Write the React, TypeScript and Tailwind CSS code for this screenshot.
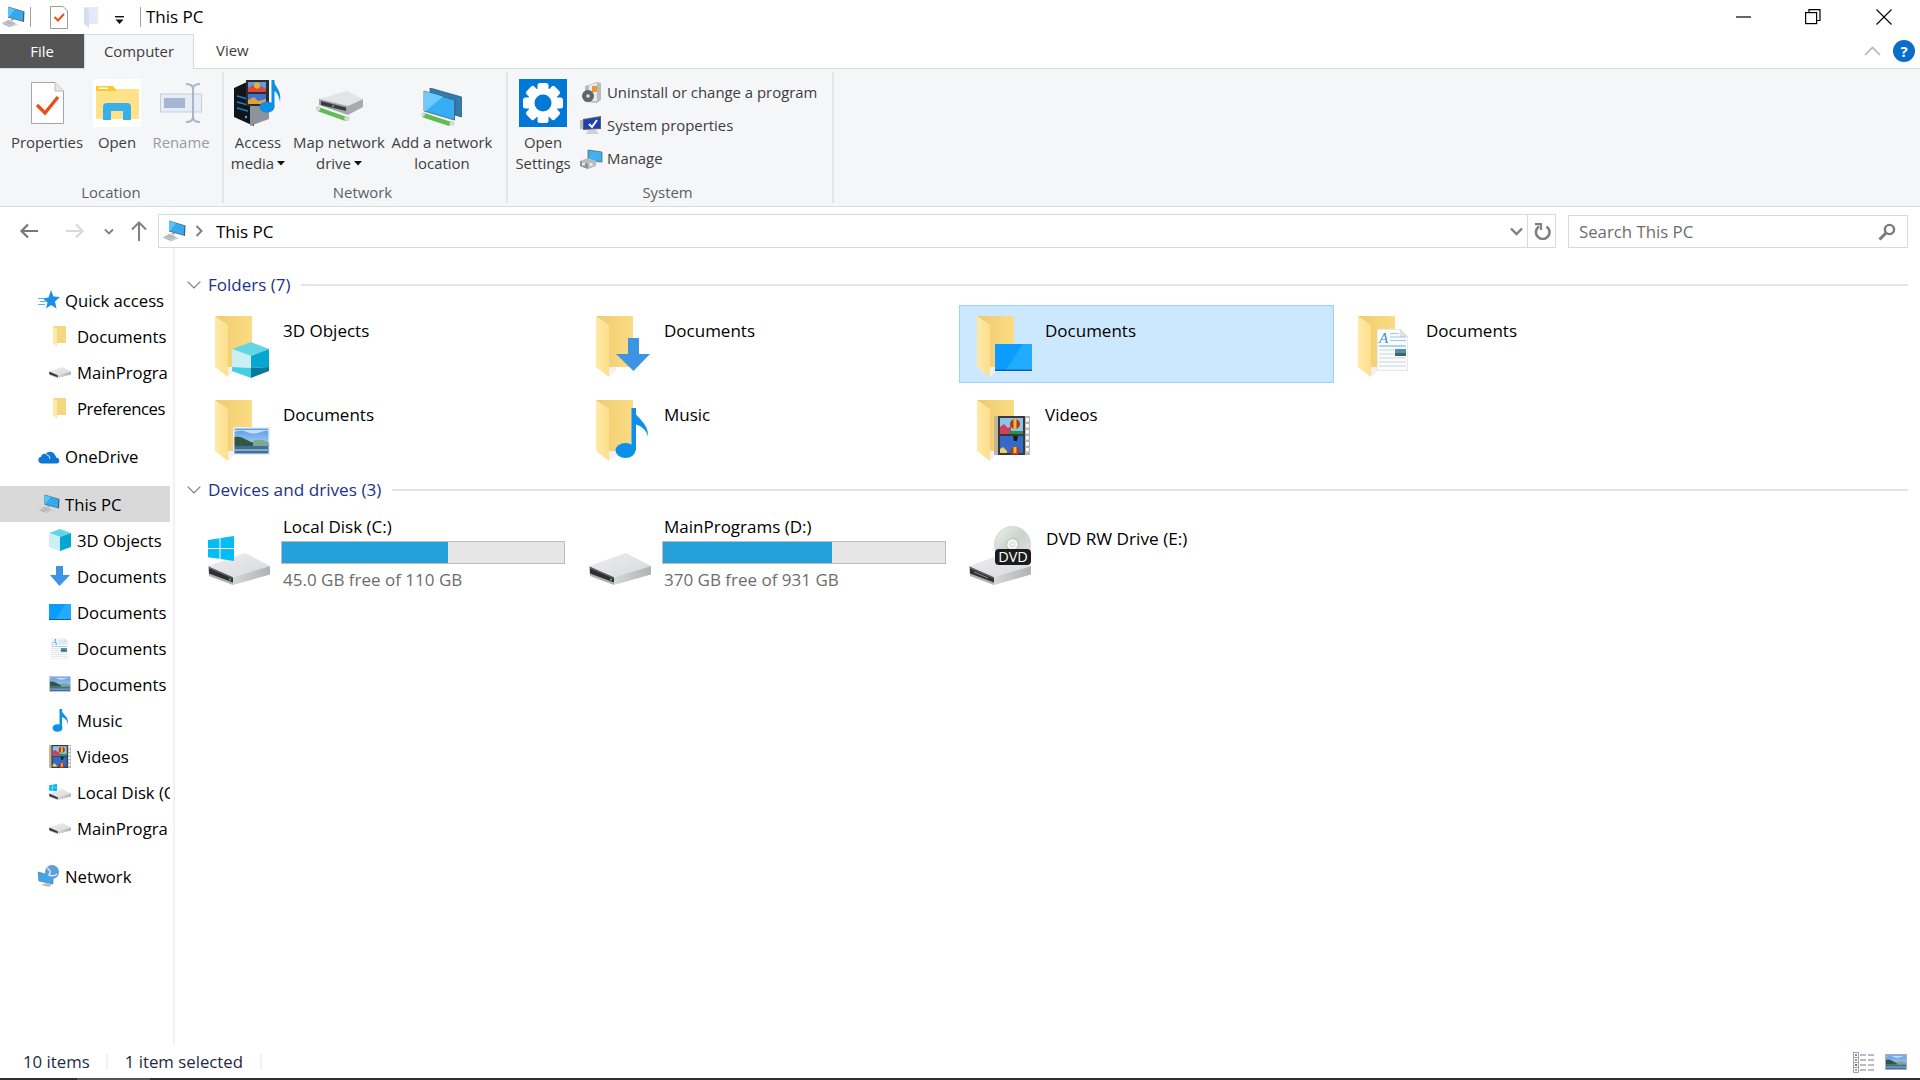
import React from "react";

const Tri = () => (
  <svg width="8" height="5" viewBox="0 0 8 5" className="inline-block ml-[3px] mb-[3px]"><path d="M0 0h8L4 4.5z" fill="#111" /></svg>
);

const Pc = ({ w = 24, h = 22 }: { w?: number; h?: number }) => (
  <svg width={w} height={h} viewBox="0 0 24 22">
    <path d="M0.5 17L8 13.5L17 18.5L9 21.5z" fill="#cfd3d8" />
    <path d="M2 17.5L9 20.2M4 16L11.5 18.7M6 14.8L13.5 17.5" stroke="#8f949a" strokeWidth="0.7" />
    <path d="M7 0.5L23.5 5.5L23 16L7 11.5z" fill="#4a5c6c" />
    <path d="M7 1L22.3 5.7L21.8 15L7 10.8z" fill="#35a9f0" />
    <path d="M7 1L14 3.2L8 10.9L7 10.8z" fill="#5cc2f8" />
    <path d="M11 12.5L13 13L12 14.8L9.5 14z" fill="#9aa0a6" />
  </svg>
);

const Drive = ({ w = 62, h = 32, led = true, slot = false }: { w?: number; h?: number; led?: boolean; slot?: boolean }) => (
  <svg width={w} height={h} viewBox="0 0 62 32" preserveAspectRatio="none">
    <defs>
      <linearGradient id="dr" x1="0" x2="1" y1="0" y2="0"><stop offset="0" stopColor="#d6d7d9" /><stop offset="1" stopColor="#b0b2b4" /></linearGradient>
      <linearGradient id="dt" x1="0" x2="1" y1="0" y2="1"><stop offset="0" stopColor="#eeeef0" /><stop offset="1" stopColor="#d8d9dc" /></linearGradient>
    </defs>
    <path d="M0 13L37 0L62 13L25 24z" fill="url(#dt)" />
    <path d="M25 24L62 13L62 21.5L25 32z" fill="url(#dr)" />
    <path d="M0 13L25 24L25 32L1 23z" fill="#b0b1b3" />
    <path d="M1 14L25 24.5L25 29.5L1 20.5z" fill="#2f2f31" />
    <path d="M1 14L25 24.5L25 25.8L1 15.6z" fill="#626264" />
    {led && <circle cx="22" cy="26.5" r="1" fill="#35e04a" />}
    {slot && <path d="M5 19L19 25" stroke="#8a8a8a" strokeWidth="1" />}
  </svg>
);

const Win = ({ s = 26 }: { s?: number }) => (
  <svg width={s} height={s} viewBox="0 0 26 26">
    <path d="M0 4L11.5 2.3V12H0z" fill="#05bdf4" />
    <path d="M12.5 2L26 0V12H12.5z" fill="#05bdf4" />
    <path d="M0 13H11.5V22.8L0 21.2z" fill="#05bdf4" />
    <path d="M12.5 13H26V25L12.5 23z" fill="#05bdf4" />
  </svg>
);

const FolderSm = () => (
  <svg width="15" height="21" viewBox="0 0 15 21">
    <path d="M1 0H14V17H4z" fill="#f6d77f" />
    <path d="M1 0L5 3V21L1 17z" fill="#ffe9a6" />
  </svg>
);

const Landscape = ({ w, h, frame = "#fff" }: { w: number; h: number; frame?: string }) => (
  <svg width={w} height={h} viewBox="0 0 37 28" preserveAspectRatio="none">
    <defs><linearGradient id="sky" x1="0" x2="0" y1="0" y2="1"><stop offset="0" stopColor="#5a9ce8" /><stop offset="1" stopColor="#cde3f4" /></linearGradient></defs>
    <rect x="0" y="0" width="37" height="28" fill={frame} stroke="#d8d8d8" strokeWidth="0.8" />
    <rect x="1.5" y="1.5" width="34" height="25" fill="url(#sky)" />
    <path d="M1.5 5Q8 2 14 5T28 5T35.5 6V3H1.5z" fill="#dcebf8" opacity="0.8" />
    <path d="M1.5 10Q7 9 12 12T22 16L35.5 17V19H1.5z" fill="#34583f" />
    <path d="M20 14Q26 11 35.5 15V19H20z" fill="#7fa98f" />
    <rect x="1.5" y="19" width="34" height="7.5" fill="#3f6f9c" />
    <rect x="1.5" y="22" width="34" height="2" fill="#87abc5" />
  </svg>
);

const Film = ({ w, h }: { w: number; h: number }) => (
  <svg width={w} height={h} viewBox="0 0 36 39" preserveAspectRatio="none">
    <rect x="0" y="0" width="36" height="39" fill="#b8b8b8" />
    <rect x="4" y="0" width="27" height="39" fill="#343a42" />
    {[2, 8, 14, 20, 26, 32].map((y) => (
      <g key={y}><rect x="0.8" y={y} width="2.4" height="3.6" fill="#d6b45a" /><rect x="32" y={y} width="2.8" height="3.6" fill="#fff" /></g>
    ))}
    <rect x="6" y="2" width="23" height="16" fill="#8cc4ec" />
    <path d="M6 18V11L10 8L14 12L17 10V18z" fill="#d1405a" />
    <rect x="15" y="15" width="14" height="3" fill="#2d8f4c" />
    <circle cx="21" cy="8" r="5" fill="#b8341f" /><path d="M19.5 3h3v10h-3z" fill="#e8c030" />
    <rect x="6" y="20" width="23" height="17" fill="#3469c8" />
    <path d="M19 20h5l-1 5h-3z" fill="#1c1c1c" />
    <circle cx="21" cy="35" r="4.5" fill="#b8341f" /><path d="M19.5 31h3v6h-3z" fill="#e8c030" />
    <path d="M6 37V33L9 31L13 35V37z" fill="#f0d060" />
  </svg>
);

const DocPage = ({ w, h }: { w: number; h: number }) => (
  <svg width={w} height={h} viewBox="0 0 31 42" preserveAspectRatio="none">
    <path d="M0 0H23L31 8V42H0z" fill="#fafbfc" stroke="#c5c8cc" strokeWidth="0.7" />
    <path d="M23 0L31 8H23z" fill="#dfe2e5" />
    <text x="2" y="14" fontFamily="Liberation Serif, serif" fontStyle="italic" fontSize="15" fill="#3b93d8">A</text>
    <path d="M13 4.5H22M13 8H29M13 11.5H29" stroke="#9fc7e6" strokeWidth="1" />
    <path d="M2 17H29" stroke="#9fc7e6" strokeWidth="1.6" />
    <path d="M2 21H17M2 25H17M2 29H29M2 33H29M2 37H29" stroke="#cfd4da" strokeWidth="1" />
    <rect x="18" y="20" width="11" height="7" fill="#4f8fb8" /><rect x="18" y="24" width="11" height="3" fill="#40665a" />
  </svg>
);

const Folder = ({ kind }: { kind: string }) => (
  <div className="relative w-[58px] h-[62px] shrink-0">
    <svg width="58" height="62" viewBox="0 0 58 62" className="block">
      <defs>
        <linearGradient id="fb" x1="0" x2="1" y1="0" y2="0"><stop offset="0" stopColor="#efca6f" /><stop offset="1" stopColor="#fbdc83" /></linearGradient>
        <linearGradient id="fd" x1="0" x2="1" y1="0" y2="0"><stop offset="0" stopColor="#ffeaa8" /><stop offset="1" stopColor="#fddf8c" /></linearGradient>
      </defs>
      <path d="M0 0H37V51H13z" fill="url(#fb)" />
      <path d="M0 0L13 9V61L0 51z" fill="url(#fd)" />
      <path d="M13 51H20V54L13 61z" fill="#f1f1f1" />
      {kind === "cube" && (
        <g>
          <path d="M17 33L36 26L54 33L36 40z" fill="#63d6e6" />
          <path d="M17 33L36 40V52L17 51z" fill="#cbeff3" />
          <path d="M36 40L54 33V51L36 52z" fill="#04a7d2" />
          <path d="M17 51L36 52V62L17 55z" fill="#3ed0e2" />
          <path d="M36 52L54 51V55L36 62z" fill="#06799c" />
        </g>
      )}
      {kind === "down" && <path d="M32 22H43V38H54L37.5 55L20 38H32z" fill="#3d94e3" />}
      {kind === "desk" && (
        <g>
          <rect x="18" y="28" width="37" height="27" fill="#0a9dfd" />
          <path d="M28 55L46 28H55V55z" fill="#22acff" />
          <rect x="18" y="53.6" width="37" height="1.4" fill="#0b5fae" />
        </g>
      )}
      {kind === "music" && (
        <g fill="#0c90e9">
          <ellipse cx="29.5" cy="50.5" rx="10" ry="7.5" />
          <rect x="35.5" y="8" width="4.5" height="42" />
          <path d="M37 8C39 18 53 22 52 37C51 31 46 26 39 24z" />
        </g>
      )}
    </svg>
    {kind === "doc" && <div className="absolute left-[19px] top-[13px]"><DocPage w={31} h={42} /></div>}
    {kind === "pic" && <div className="absolute left-[18px] top-[27px]"><Landscape w={37} h={28} /></div>}
    {kind === "film" && <div className="absolute left-[17px] top-[16px]"><Film w={36} h={39} /></div>}
  </div>
);

const Tile = ({ kind, label, sel }: { kind: string; label: string; sel?: boolean }) => (
  <div className={`flex h-[78px] pl-[17px] pt-[10px] border ${sel ? "bg-[#cce8ff] border-[#99d1ff]" : "border-transparent"}`}>
    <Folder kind={kind} />
    <div className="ml-[10px] mt-[3px] text-black leading-6">{label}</div>
  </div>
);

const Bar = ({ pct, label }: { pct: number; label: string }) => (
  <div className="flex flex-col">
    <div className="w-[284px] h-[23px] mt-[2px] bg-[#e6e6e6] border border-[#bcbcbc]">
      <div className="h-full bg-[#26a0da]" style={{ width: `${pct}%` }} />
    </div>
    <div className="mt-[4px] ml-[2px] leading-6 text-[#6d6d6d]">{label}</div>
  </div>
);

const Nav = ({ icon, label, lvl, sel, tight }: { icon: React.ReactNode; label: string; lvl?: boolean; sel?: boolean; tight?: boolean }) => (
  <div className={`flex items-center h-9 overflow-hidden whitespace-nowrap text-black ${sel ? "bg-[#d9d9d9]" : ""}`}>
    <div className={lvl ? "w-[77px] pl-[49px] flex justify-start shrink-0" : "w-[65px] pl-[38px] flex shrink-0"}>{icon}</div>
    <span className={`mt-[1px] ${tight ? "tracking-[-0.45px]" : ""}`}>{label}</span>
  </div>
);

const BigBtn = ({ w, icon, l1, l2, tri, dim }: { w: number; icon: React.ReactNode; l1: string; l2?: string; tri?: boolean; dim?: boolean }) => (
  <div className="flex flex-col items-center shrink-0" style={{ width: w }}>
    <div className="h-12 flex items-center justify-center">{icon}</div>
    <div className={`mt-1 pt-[0.5px] text-center leading-[21px] whitespace-nowrap ${dim ? "text-[#9b9b9b]" : "text-[#3d3d3d]"}`}>
      <div>{l1}</div>
      {l2 && <div>{l2}{tri && <Tri />}</div>}
    </div>
  </div>
);

const Sep = () => <div className="w-[2px] bg-[#e4e5e7] mt-[3px] mb-[3px] shrink-0" />;

const GroupLabel = ({ t, shift }: { t: string; shift?: boolean }) => (
  <div className={`mt-auto mb-[3px] h-[22px] leading-[22px] text-center text-[#5a5f66] ${shift ? "pr-[5px]" : ""}`}>{t}</div>
);

const Gear = () => (
  <svg width="48" height="48" viewBox="0 0 48 48">
    <rect width="48" height="48" fill="#0078d7" />
    <g fill="#fff">
      {[0, 45, 90, 135, 180, 225, 270, 315].map((a) => (
        <rect key={a} x="18.5" y="4" width="11" height="12" rx="2.5" transform={`rotate(${a} 24 24)`} />
      ))}
      <circle cx="24" cy="24" r="15" />
    </g>
    <circle cx="24" cy="24" r="8.5" fill="#0078d7" />
  </svg>
);

const AccessMedia = () => (
  <svg width="48" height="48" viewBox="0 0 48 48">
    <path d="M0 9L13 3H20V47L0 38z" fill="#111418" />
    <path d="M16 24H35V40L16 47z" fill="#8f9298" />
    <path d="M3 17L14 20M3 23L14 26M3 29L14 32" stroke="#1c7fc8" strokeWidth="1.4" />
    <circle cx="12" cy="38" r="1.2" fill="#3cb2f0" />
    <rect x="12" y="1" width="23" height="26" fill="#2d2d2f" />
    <rect x="14" y="3" width="18" height="10" fill="#5a9ee0" />
    <rect x="14" y="15" width="18" height="10" fill="#3c72d0" />
    <path d="M14 13V9L19 6L23 10L27 7L32 10V13z" fill="#d84a3a" />
    <circle cx="23" cy="6.5" r="3" fill="#e8b030" />
    <path d="M14 25V21L20 18L24 22L32 20V25z" fill="#e0a040" />
    <g fill="#0e8fe6">
      <ellipse cx="33" cy="28" rx="7.5" ry="5.5" />
      <rect x="37.5" y="1" width="3" height="27" />
      <path d="M39 1C41 8 48 11 46 23C45 17 43 13 40 12z" />
    </g>
  </svg>
);

const MapNet = () => (
  <svg width="48" height="31" viewBox="0 0 48 31" className="mt-[6px]">
    <path d="M4 8L32 0L48 8L33 15z" fill="#e3e4e6" />
    <path d="M33 15L48 8V16L33 24z" fill="#a8aaad" />
    <path d="M4 8L33 15V24L4 14z" fill="#a4a5a8" />
    <path d="M6 10L31 16.5V20L6 14z" fill="#3a3b3e" />
    <circle cx="18" cy="15" r="0.9" fill="#4fe06a" />
    <path d="M3 18L31 28" stroke="#5fbd55" strokeWidth="4.5" />
    <circle cx="3" cy="17.5" r="2.4" fill="#d8d8d8" /><circle cx="32" cy="27.5" r="2.6" fill="#d8d8d8" />
  </svg>
);

const AddNet = () => (
  <svg width="42" height="38" viewBox="0 0 42 38" className="mt-[8px]">
    <path d="M9 0L40.5 9V29L34 27V12L9 5z" fill="#2b7fb8" stroke="#45535f" strokeWidth="0.8" />
    <path d="M3 3L33.5 12V32L3 23z" fill="#35aef5" stroke="#4c5a66" strokeWidth="0.8" />
    <path d="M3 3L22 8.5L5 23L3 23z" fill="#6ccbfa" />
    <path d="M2 27L29 36" stroke="#5fbd55" strokeWidth="4.5" />
    <circle cx="2" cy="26.5" r="2" fill="#d8d8d8" /><circle cx="31" cy="35.5" r="2.4" fill="#d8d8d8" />
  </svg>
);

const Net = () => (
  <svg width="22" height="23" viewBox="0 0 22 23">
    <path d="M0 7L15 11V19L1 16z" fill="#36a8ee" stroke="#5a6a75" strokeWidth="0.6" />
    <circle cx="14" cy="7" r="7" fill="#5b9fd6" />
    <path d="M9 3Q14 6 11 10Q16 12 19 9" stroke="#cfe6f6" strokeWidth="1.6" fill="none" />
    <path d="M3 20L11 22L14 19.5L8 18z" fill="#b9bcc0" />
  </svg>
);

const SmallDrive = () => <Drive w={22} h={11} />;

const Star = () => (
  <svg width="22" height="20" viewBox="0 0 22 20">
    <path d="M13 0L15.5 6.5L22 7L17 11.5L18.5 18.5L13 15L8 18.5L9.5 12.5L5 8.5L10.5 7.5z" fill="#1a8fe8" />
    <path d="M0 8.5H6M2 11.5H8M0 14.5H7" stroke="#58b0ee" strokeWidth="1" />
  </svg>
);

const Cloud = () => (
  <svg width="22" height="15" viewBox="0 0 22 15">
    <path d="M3.5 14.5A3.4 3.4 0 0 1 3 7.8A4 4 0 0 1 7.8 5A5.2 5.2 0 0 1 17 6A3 3 0 0 1 18 8.6A3 3 0 0 1 19 14.5z" fill="#0f78d4" />
    <path d="M8 5.5Q12 6 12 10" stroke="#fff" strokeWidth="0.8" fill="none" />
  </svg>
);

export default function App() {
  return (
    <div className="w-[1920px] h-[1080px] flex flex-col bg-white overflow-hidden text-[17px] [font-family:'Open_Sans',sans-serif]">
      {/* title bar */}
      <div className="h-[34px] shrink-0 flex items-center text-black">
        <div className="ml-[1px]"><Pc /></div>
        <div className="ml-[5px] w-px h-5 bg-[#a0a0a0]" />
        <svg width="18" height="23" viewBox="0 0 18 23" className="ml-[19px]">
          <path d="M0.5 0.5H13L17.5 5V22.5H0.5z" fill="#fff" stroke="#9b9b9b" />
          <path d="M4.5 11L8 14.5L14 8" stroke="#e8501a" strokeWidth="2" fill="none" />
        </svg>
        <svg width="15" height="21" viewBox="0 0 15 21" className="ml-[16px]">
          <path d="M0 0H14V17H5z" fill="#e3ebf6" /><path d="M0 0L5 3V21L0 17z" fill="#d3deee" />
        </svg>
        <svg width="9" height="9" viewBox="0 0 9 9" className="ml-[16px] mt-[6px]">
          <rect y="0" width="9" height="1.4" fill="#111" /><path d="M0.5 3.5H8.5L4.5 8z" fill="#111" />
        </svg>
        <div className="ml-[16px] w-px h-5 bg-[#a0a0a0]" />
        <span className="ml-[5px]">This PC</span>
        <div className="ml-auto flex items-center">
          <svg width="16" height="16" viewBox="0 0 16 16"><path d="M0 8H15" stroke="#000" strokeWidth="1.2" /></svg>
          <svg width="16" height="16" viewBox="0 0 16 16" className="ml-[53px]">
            <rect x="0.6" y="3.6" width="11" height="11" fill="none" stroke="#000" strokeWidth="1.2" />
            <path d="M4 3.5V0.6H15V11.5H12" fill="none" stroke="#000" strokeWidth="1.2" />
          </svg>
          <svg width="16" height="16" viewBox="0 0 16 16" className="ml-[55px] mr-[28px]"><path d="M0.5 0.5L15.5 15.5M15.5 0.5L0.5 15.5" stroke="#000" strokeWidth="1.1" /></svg>
        </div>
      </div>

      {/* tabs */}
      <div className="h-[35px] shrink-0 flex border-b border-[#dadbdc] text-[14.9px]">
        <div className="w-[84px] h-[34px] bg-[#555555] text-white flex items-center justify-center">File</div>
        <div className="w-[110px] h-[35px] pb-[2px] bg-[#f5f6f8] border-x border-t border-[#dadbdc] text-[#3d3d3d] flex items-center justify-center">Computer</div>
        <div className="ml-[22px] pb-[1px] text-[#3d3d3d] flex items-center">View</div>
        <div className="ml-auto flex items-center pr-[5px]">
          <svg width="17" height="10" viewBox="0 0 17 10"><path d="M1 9L8.5 1.5L16 9" fill="none" stroke="#b5b5b5" strokeWidth="1.6" /></svg>
          <div className="ml-[12px] w-[22px] h-[22px] rounded-full bg-[#0a6ccb] text-white font-bold flex items-center justify-center text-[15px]">?</div>
        </div>
      </div>

      {/* ribbon */}
      <div className="h-[138px] shrink-0 flex bg-[#f5f6f8] border-b border-[#dadbdc] text-[14.9px]">
        <div className="w-[222px] flex flex-col pt-[10px] pl-[12px]">
          <div className="flex">
            <BigBtn w={70} l1="Properties" icon={
              <svg width="33" height="42" viewBox="0 0 33 42">
                <path d="M0.5 0.5H24L32.5 9V41.5H0.5z" fill="#fff" stroke="#a5a5a5" />
                <path d="M24 0.5V9H32.5" fill="#e8e8e8" stroke="#bdbdbd" />
                <path d="M6 23L14 31L27 15" stroke="#e8501a" strokeWidth="3.4" fill="none" />
              </svg>} />
            <BigBtn w={70} l1="Open" icon={
              <svg width="48" height="48" viewBox="0 0 48 48">
                <rect width="48" height="48" fill="#fff" />
                <path d="M3 10H46V40H3z" fill="#ffe28a" />
                <path d="M3 7H20L24 12H3z" fill="#fbc830" />
                <rect x="6" y="8.5" width="9" height="1.5" fill="#fff" />
                <path d="M10 41V28Q10 24 14 24H34Q38 24 38 28V41H30V32H18V41z" fill="#36b0ea" />
              </svg>} />
            <BigBtn w={58} dim l1="Rename" icon={
              <svg width="43" height="40" viewBox="0 0 43 40">
                <rect x="0.5" y="11" width="41" height="18" fill="#e7edf7" stroke="#c3cfe1" />
                <rect x="4" y="15" width="21" height="10" fill="#a6b5d1" />
                <path d="M26 1Q33 1 33 6V34Q33 39 26 39M40 1Q33 1 33 6V34Q33 39 40 39" fill="none" stroke="#a9b5c8" strokeWidth="2" />
              </svg>} />
          </div>
          <div className="-ml-[12px] mt-auto"><GroupLabel t="Location" /></div>
        </div>
        <Sep />
        <div className="w-[282px] flex flex-col pt-[10px]">
          <div className="flex">
            <BigBtn w={68} l1="Access" l2="media" tri icon={<AccessMedia />} />
            <BigBtn w={94} l1="Map network" l2="drive" tri icon={<MapNet />} />
            <BigBtn w={112} l1="Add a network" l2="location" icon={<AddNet />} />
          </div>
          <GroupLabel t="Network" shift />
        </div>
        <Sep />
        <div className="w-[324px] flex flex-col pt-[10px]">
          <div className="flex">
            <BigBtn w={70} l1="Open" l2="Settings" icon={<Gear />} />
            <div className="flex flex-col text-[#3d3d3d] ml-[2px] -mt-[3px]">
              {[
                ["Uninstall or change a program",
                  <svg key="a" width="22" height="22" viewBox="0 0 22 22">
                    <path d="M5 4L17 0L21 1V18L17 21L5 20z" fill="#b9bbbd" />
                    <path d="M9 3L17 1V19L9 19z" fill="#e8e8e8" />
                    <rect x="12" y="4" width="5" height="6" fill="#e89a30" />
                    <circle cx="8" cy="14" r="6" fill="#5f6569" /><circle cx="8" cy="14" r="1.8" fill="#dfe4e8" />
                  </svg>],
                ["System properties",
                  <svg key="b" width="22" height="19" viewBox="0 0 22 19">
                    <rect x="0" y="4" width="3" height="9" fill="#b9bbbd" />
                    <path d="M3 3L21 0V13L3 14z" fill="#5a5f66" />
                    <path d="M4 4L20 1.5V12L4 13z" fill="#1f3fb0" />
                    <path d="M9 8L12 11L17 4" stroke="#fff" strokeWidth="2" fill="none" />
                    <path d="M8 14H16L19 18H6z" fill="#cfd2d6" />
                  </svg>],
                ["Manage",
                  <svg key="c" width="23" height="20" viewBox="0 0 23 20">
                    <path d="M8 1L22 3V13L8 12z" fill="#3fb0f0" stroke="#4c5a66" strokeWidth="0.7" />
                    <path d="M0 12L8 9L16 12V17L8 20L0 17z" fill="#b9bbbd" />
                    <path d="M0 12L8 15V20L0 17z" fill="#8d8f92" />
                    <rect x="2" y="13.5" width="3" height="3" fill="#e8e8e8" /><rect x="9.5" y="14" width="3" height="3" fill="#e8e8e8" />
                  </svg>],
              ].map(([t, ic], i) => (
                <div key={i} className="flex items-center h-[33px]">
                  <div className="w-[27px] flex justify-start">{ic}</div>
                  <span className="whitespace-nowrap">{t}</span>
                </div>
              ))}
            </div>
          </div>
          <GroupLabel t="System" shift />
        </div>
        <Sep />
      </div>

      {/* address row */}
      <div className="h-[41px] shrink-0 flex items-end">
        <div className="w-[158px] h-[34px] flex items-center">
          <svg width="20" height="16" viewBox="0 0 20 16" className="ml-[19px]"><path d="M19 8H3M9 1.5L2.5 8L9 14.5" fill="none" stroke="#777" strokeWidth="2.2" /></svg>
          <svg width="20" height="16" viewBox="0 0 20 16" className="ml-[26px]"><path d="M1 8H17M11 1.5L17.5 8L11 14.5" fill="none" stroke="#d9d9d9" strokeWidth="2.2" /></svg>
          <svg width="10" height="7" viewBox="0 0 10 7" className="ml-[19px]"><path d="M1 1.5L5 5.5L9 1.5" fill="none" stroke="#808080" strokeWidth="1.8" /></svg>
          <svg width="16" height="20" viewBox="0 0 16 20" className="ml-[17px]"><path d="M8 20V2M1 8.5L8 1.5L15 8.5" fill="none" stroke="#808080" strokeWidth="2" /></svg>
        </div>
        <div className="w-[1398px] h-[34px] border border-[#d9d9d9] flex items-center">
          <div className="ml-[3px]"><Pc /></div>
          <svg width="8" height="12" viewBox="0 0 8 12" className="ml-[9px]"><path d="M1.5 1L6.5 6L1.5 11" fill="none" stroke="#808080" strokeWidth="2" /></svg>
          <span className="ml-[13px] mt-[1px] text-black">This PC</span>
          <svg width="13" height="9" viewBox="0 0 13 9" className="ml-auto mr-[4px]"><path d="M1 1.5L6.5 7L12 1.5" fill="none" stroke="#808080" strokeWidth="2.4" /></svg>
          <div className="h-full w-[28px] border-l border-[#d9d9d9] flex items-center justify-center">
            <svg width="17" height="17" viewBox="0 0 17 17" className="ml-[2px]"><path d="M5 3.5A6.8 6.8 0 1 0 12.5 3.5" fill="none" stroke="#808080" strokeWidth="2.6" /><path d="M1 2.2H7V8" fill="none" stroke="#808080" strokeWidth="2.2" transform="translate(0 -1)" /></svg>
          </div>
        </div>
        <div className="ml-[12px] w-[340px] h-[33px] border border-[#d9d9d9] flex items-center pl-[10px] pr-[11px] text-[#6d6d6d]">
          <span className="text-[16.8px]">Search This PC</span>
          <svg width="18" height="18" viewBox="0 0 18 18" className="ml-auto"><circle cx="11.5" cy="6.5" r="4.6" fill="none" stroke="#7a7a7a" strokeWidth="2.4" /><path d="M8 10L1.5 16.5" stroke="#7a7a7a" strokeWidth="3" /></svg>
        </div>
      </div>

      {/* body */}
      <div className="flex-1 min-h-0 flex">
        <div className="w-[175px] shrink-0 border-r-2 border-[#f2f2f2] pt-[34px] text-[16.7px]">
          <div className="w-[170px]">
            <Nav label="Quick access" icon={<Star />} />
            <Nav lvl label="Documents" icon={<div className="pl-[3px]"><FolderSm /></div>} />
            <Nav lvl label="MainProgra" icon={<SmallDrive />} />
            <Nav lvl tight label="Preferences" icon={<div className="pl-[3px]"><FolderSm /></div>} />
            <div className="mt-3"><Nav label="OneDrive" icon={<Cloud />} /></div>
            <div className="mt-3"><Nav sel label="This PC" icon={<Pc w={22} h={20} />} /></div>
            <Nav lvl label="3D Objects" icon={
              <svg width="22" height="22" viewBox="0 0 22 22"><path d="M0 4L11 0L22 4L11 8z" fill="#63d6e6" /><path d="M0 4L11 8V22L0 18z" fill="#cbeff3" /><path d="M11 8L22 4V18L11 22z" fill="#04a7d2" /></svg>} />
            <Nav lvl label="Documents" icon={
              <svg width="20" height="20" viewBox="0 0 20 20" className="ml-[1px]"><path d="M6 0H13V9H20L9.5 20L0 9H6z" fill="#3d94e3" /></svg>} />
            <Nav lvl label="Documents" icon={
              <svg width="22" height="16" viewBox="0 0 22 16"><rect width="22" height="16" fill="#0a9dfd" /><path d="M6 16L16 0H22V16z" fill="#22acff" /><rect y="15" width="22" height="1" fill="#0b5fae" /></svg>} />
            <Nav lvl label="Documents" icon={<div className="pl-[2px]"><DocPage w={17} h={21} /></div>} />
            <Nav lvl label="Documents" icon={<Landscape w={22} h={16} frame="#cfcfcf" />} />
            <Nav lvl label="Music" icon={
              <svg width="17" height="23" viewBox="0 0 17 23" className="ml-[3px]"><g fill="#0c90e9"><ellipse cx="5.5" cy="19" rx="5" ry="3.8" /><rect x="7.5" y="0" width="2.6" height="19" /><path d="M9 0C10 6 17 7 16 15C15 11 13 9 10 8z" /></g></svg>} />
            <Nav lvl label="Videos" icon={<Film w={22} h={23} />} />
            <Nav lvl label="Local Disk (C:)" icon={
              <div className="relative w-[22px] h-[16px]">
                <div className="absolute left-0 top-0"><Win s={8} /></div>
                <div className="absolute left-0 top-[5px]"><SmallDrive /></div>
              </div>} />
            <Nav lvl label="MainProgra" icon={<SmallDrive />} />
            <div className="mt-3"><Nav label="Network" icon={<Net />} /></div>
          </div>
        </div>

        <div className="flex-1 min-w-0 pt-[25px]">
          <div className="flex items-center h-6 pl-[12px] pr-[12px]">
            <svg width="14" height="8" viewBox="0 0 14 8"><path d="M0.7 0.7L7 7L13.3 0.7" fill="none" stroke="#7a7a7a" strokeWidth="1.2" /></svg>
            <span className="ml-[7px] text-[#1e3287]">Folders (7)</span>
            <div className="ml-[11px] flex-1 h-[2px] bg-[#e5e5e5]" />
          </div>
          <div className="mt-2 ml-[22px] grid grid-cols-[375px_375px_375px_375px] gap-x-[6px] gap-y-[6px]">
            <Tile kind="cube" label="3D Objects" />
            <Tile kind="down" label="Documents" />
            <Tile kind="desk" label="Documents" sel />
            <Tile kind="doc" label="Documents" />
            <Tile kind="pic" label="Documents" />
            <Tile kind="music" label="Music" />
            <Tile kind="film" label="Videos" />
          </div>
          <div className="flex items-center h-6 pl-[12px] pr-[12px] mt-[11px]">
            <svg width="14" height="8" viewBox="0 0 14 8"><path d="M0.7 0.7L7 7L13.3 0.7" fill="none" stroke="#7a7a7a" strokeWidth="1.2" /></svg>
            <span className="ml-[7px] text-[#1e3287] text-[17.2px]">Devices and drives (3)</span>
            <div className="ml-[11px] flex-1 h-[2px] bg-[#e5e5e5]" />
          </div>
          <div className="mt-2 ml-[22px] grid grid-cols-[375px_375px_375px] gap-x-[6px]">
            <div className="flex pl-[11px] pt-[5px]">
              <div className="relative w-[73px] h-[68px] shrink-0 pt-[38px]">
                <div className="absolute left-0 top-[21px]"><Win /></div>
                <Drive />
              </div>
              <div className="flex flex-col">
                <div className="ml-[2px] leading-6 text-black">Local Disk (C:)</div>
                <Bar pct={58.8} label="45.0 GB free of 110 GB" />
              </div>
            </div>
            <div className="flex pl-[11px] pt-[5px]">
              <div className="w-[73px] h-[68px] shrink-0 pt-[38px]"><Drive /></div>
              <div className="flex flex-col">
                <div className="ml-[2px] leading-6 text-black">MainPrograms (D:)</div>
                <Bar pct={60} label="370 GB free of 931 GB" />
              </div>
            </div>
            <div className="flex pl-[10px] pt-[5px]">
              <div className="relative w-[77px] h-[68px] shrink-0 pt-[38px]">
                <Drive led={false} slot />
                <svg width="37" height="37" viewBox="0 0 37 37" className="absolute left-[25px] top-[11px]">
                  <defs><linearGradient id="disc" x1="0" x2="1" y1="0" y2="1"><stop offset="0" stopColor="#eef1ee" /><stop offset="0.5" stopColor="#c9d2cc" /><stop offset="1" stopColor="#e6e9e6" /></linearGradient></defs>
                  <circle cx="18.5" cy="18.5" r="18" fill="url(#disc)" stroke="#c2c7c4" strokeWidth="0.6" />
                  <circle cx="18.5" cy="18.5" r="6" fill="#f2f2f2" stroke="#b5b5b5" />
                  <circle cx="18.5" cy="18.5" r="2" fill="#fff" stroke="#b5b5b5" strokeWidth="0.6" />
                </svg>
                <div className="absolute left-[26px] top-[34px] w-[36px] h-[16px] rounded-[4px] bg-[#1c1c1c] text-white text-[14.5px] leading-[16px] text-center">DVD</div>
              </div>
              <div className="mt-[12px] leading-6 text-black text-[17.2px]">DVD RW Drive (E:)</div>
            </div>
          </div>
        </div>
      </div>

      {/* status */}
      <div className="h-[34px] shrink-0 flex items-center text-[#1f2a44] pt-[2px]">
        <span className="ml-[23px] text-[16.8px]">10 items</span>
        <div className="ml-[16px] w-[2px] h-[16px] bg-[#f2f2f2]" />
        <span className="ml-[17px] text-[16.8px]">1 item selected</span>
        <div className="ml-[17px] w-[2px] h-[16px] bg-[#f2f2f2]" />
        <svg width="22" height="21" viewBox="0 0 22 21" className="ml-auto">
          {[0, 5, 10, 15].map((y, i) => (
            <g key={y}>
              <rect x="0.5" y={y + 0.5} width="5" height="5" fill="#fff" stroke="#a5a5a5" />
              <rect x="2" y={y + 2} width="2" height="2" fill={["#4b9bd8", "#b59b3a", "#c8502a", "#7fb89a"][i]} />
              <path d={`M7 ${y + 3}H13M15 ${y + 3}H21`} stroke="#7d7d7d" strokeWidth="1.2" />
            </g>
          ))}
        </svg>
        <div className="ml-[10px] mr-[13px]"><Landscape w={22} h={16} frame="#a8a8a8" /></div>
      </div>
      <div className="h-[2px] shrink-0 flex bg-[#2f2f2f]">
        <div className="ml-[77px] w-[73px] bg-[#555555]" />
      </div>
    </div>
  );
}
